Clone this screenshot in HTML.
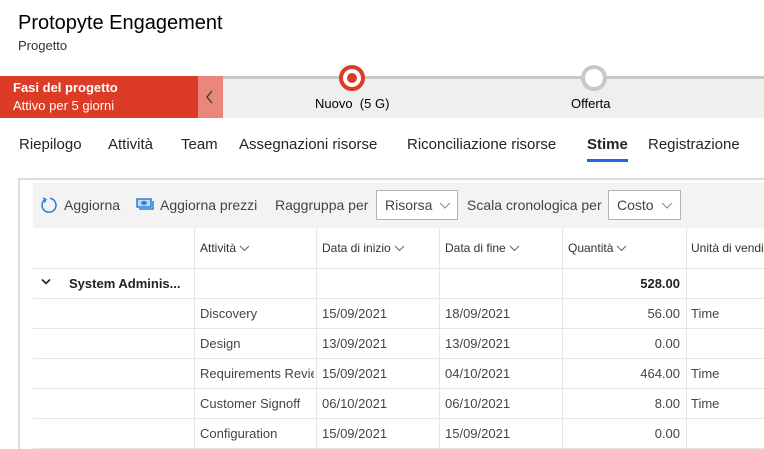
<!DOCTYPE html>
<html><head><meta charset="utf-8"><style>
*{margin:0;padding:0;box-sizing:border-box}
body{width:764px;height:449px;overflow:hidden;background:#fff;font-family:"Liberation Sans",sans-serif;color:#323130;position:relative}
.a{position:absolute;white-space:nowrap}
.tab{position:absolute;top:136px;font-size:15px;color:#242424;white-space:nowrap}
.cell{position:absolute;font-size:13px;color:#444;white-space:nowrap}
.h{position:absolute;font-size:12px;color:#333;white-space:nowrap}
.h svg{vertical-align:middle;margin-left:3px}
.vl{position:absolute;top:228px;height:221px;width:1px;background:#e6e6e6}
.hl{position:absolute;left:33px;width:731px;height:1px;background:#e6e6e6}
.dd{position:absolute;top:190px;height:30px;border:1px solid #b3b3b3;background:#fff;font-size:14px;color:#444;padding:6px 0 0 8px;white-space:nowrap}
.dd svg{position:absolute;top:11px}
</style></head><body>
<div class="a" style="left:18px;top:12px;font-size:20px;color:#000">Protopyte Engagement</div>
<div class="a" style="left:18px;top:38px;font-size:13px;color:#333">Progetto</div>

<div class="a" style="left:0;top:76px;width:198px;height:42px;background:#dc3b25"></div>
<div class="a" style="left:13px;top:80px;font-size:13px;font-weight:bold;color:#fff">Fasi del progetto</div>
<div class="a" style="left:13px;top:98px;font-size:13px;color:#fff">Attivo per 5 giorni</div>
<div class="a" style="left:198px;top:76px;width:25px;height:42px;background:#e9877a"></div>
<svg class="a" style="left:204px;top:89px" width="12" height="16"><path d="M8 2 L3 8 L8 14" stroke="#333" fill="none" stroke-width="1.2"/></svg>
<div class="a" style="left:223px;top:76px;width:541px;height:42px;background:#efefef"></div>
<div class="a" style="left:223px;top:76px;width:541px;height:3px;background:#c8c8c8"></div>
<div class="a" style="left:339px;top:65px;width:26px;height:26px;border-radius:50%;border:4px solid #dc3b25;background:#fff"></div>
<div class="a" style="left:347px;top:73px;width:10px;height:10px;border-radius:50%;background:#dc3b25"></div>
<div class="a" style="left:581px;top:65px;width:26px;height:26px;border-radius:50%;border:4px solid #c8c8c8;background:#fff"></div>
<div class="a" style="left:315px;top:96px;font-size:13px;color:#000">Nuovo&nbsp; (5 G)</div>
<div class="a" style="left:571px;top:96px;font-size:13px;color:#000">Offerta</div>

<div class="tab" style="left:19px">Riepilogo</div>
<div class="tab" style="left:108px">Attività</div>
<div class="tab" style="left:181px">Team</div>
<div class="tab" style="left:239px">Assegnazioni risorse</div>
<div class="tab" style="left:407px">Riconciliazione risorse</div>
<div class="tab" style="left:587px;font-weight:bold">Stime</div>
<div class="a" style="left:587px;top:159px;width:41px;height:3px;background:#2266e3"></div>
<div class="tab" style="left:648px">Registrazione</div>

<div class="a" style="left:18px;top:178px;width:746px;height:271px;border-left:2px solid #ddd;border-top:2px solid #ddd"></div>
<div class="a" style="left:33px;top:183px;width:731px;height:45px;background:#f3f3f3"></div>
<svg class="a" style="left:40px;top:196px" width="18" height="18"><path d="M5 3.5 A7 7 0 1 0 10 2.3" stroke="#2b7cd3" fill="none" stroke-width="1.5"/><path d="M3 2 L6 3.5 L4.5 6.5" stroke="#2b7cd3" fill="none" stroke-width="1.3"/></svg>
<div class="a" style="left:64px;top:197px;font-size:14px;color:#444">Aggiorna</div>
<svg class="a" style="left:136px;top:197px" width="18" height="14"><rect x="1" y="2" width="14" height="8" fill="#bcd8f5" stroke="#2b7cd3" stroke-width="1.5"/><ellipse cx="8" cy="6" rx="3" ry="2" fill="#2b7cd3"/><path d="M3 12 H17 V4" stroke="#2b7cd3" fill="none" stroke-width="1.5"/></svg>
<div class="a" style="left:160px;top:197px;font-size:14px;color:#444">Aggiorna prezzi</div>
<div class="a" style="left:275px;top:197px;font-size:14px;color:#444">Raggruppa per</div>
<div class="dd" style="left:376px;width:82px">Risorsa <svg style="left:62px" width="12" height="7"><path d="M1 1 L6 6 L11 1" stroke="#888" fill="none"/></svg></div>
<div class="a" style="left:467px;top:197px;font-size:14px;color:#444">Scala cronologica per</div>
<div class="dd" style="left:608px;width:73px">Costo <svg style="left:52px" width="12" height="7"><path d="M1 1 L6 6 L11 1" stroke="#888" fill="none"/></svg></div>

<div class="hl" style="top:268px"></div>
<div class="hl" style="top:298px"></div>
<div class="hl" style="top:328px"></div>
<div class="hl" style="top:358px"></div>
<div class="hl" style="top:388px"></div>
<div class="hl" style="top:418px"></div>
<div class="hl" style="top:448px"></div>
<div class="vl" style="left:194px"></div>
<div class="vl" style="left:316px"></div>
<div class="vl" style="left:439px"></div>
<div class="vl" style="left:562px"></div>
<div class="vl" style="left:686px"></div>

<div class="h" style="left:200px;top:241px">Attività<svg width="11" height="7"><path d="M1 1 L5.5 5.5 L10 1" stroke="#666" fill="none"/></svg></div>
<div class="h" style="left:322px;top:241px">Data di inizio<svg width="11" height="7"><path d="M1 1 L5.5 5.5 L10 1" stroke="#666" fill="none"/></svg></div>
<div class="h" style="left:445px;top:241px">Data di fine<svg width="11" height="7"><path d="M1 1 L5.5 5.5 L10 1" stroke="#666" fill="none"/></svg></div>
<div class="h" style="left:568px;top:241px">Quantità<svg width="11" height="7"><path d="M1 1 L5.5 5.5 L10 1" stroke="#666" fill="none"/></svg></div>
<div class="h" style="left:691px;top:241px">Unità di vendita</div>

<svg class="a" style="left:41px;top:278px" width="10" height="8"><path d="M1 1.5 L5 5.5 L9 1.5" stroke="#222" fill="none" stroke-width="1.6"/></svg>
<div class="cell" style="left:69px;top:276px;font-weight:bold;color:#222">System Adminis...</div>
<div class="cell" style="left:562px;width:118px;text-align:right;top:276px;font-weight:bold;color:#222">528.00</div>

<div class="cell" style="left:200px;top:306px">Discovery</div><div class="cell" style="left:322px;top:306px">15/09/2021</div><div class="cell" style="left:445px;top:306px">18/09/2021</div><div class="cell" style="left:562px;width:118px;text-align:right;top:306px">56.00</div><div class="cell" style="left:691px;top:306px">Time</div>
<div class="cell" style="left:200px;top:336px">Design</div><div class="cell" style="left:322px;top:336px">13/09/2021</div><div class="cell" style="left:445px;top:336px">13/09/2021</div><div class="cell" style="left:562px;width:118px;text-align:right;top:336px">0.00</div>
<div class="cell" style="left:200px;top:366px;width:114px;overflow:hidden">Requirements Review</div><div class="cell" style="left:322px;top:366px">15/09/2021</div><div class="cell" style="left:445px;top:366px">04/10/2021</div><div class="cell" style="left:562px;width:118px;text-align:right;top:366px">464.00</div><div class="cell" style="left:691px;top:366px">Time</div>
<div class="cell" style="left:200px;top:396px">Customer Signoff</div><div class="cell" style="left:322px;top:396px">06/10/2021</div><div class="cell" style="left:445px;top:396px">06/10/2021</div><div class="cell" style="left:562px;width:118px;text-align:right;top:396px">8.00</div><div class="cell" style="left:691px;top:396px">Time</div>
<div class="cell" style="left:200px;top:426px">Configuration</div><div class="cell" style="left:322px;top:426px">15/09/2021</div><div class="cell" style="left:445px;top:426px">15/09/2021</div><div class="cell" style="left:562px;width:118px;text-align:right;top:426px">0.00</div>
</body></html>
